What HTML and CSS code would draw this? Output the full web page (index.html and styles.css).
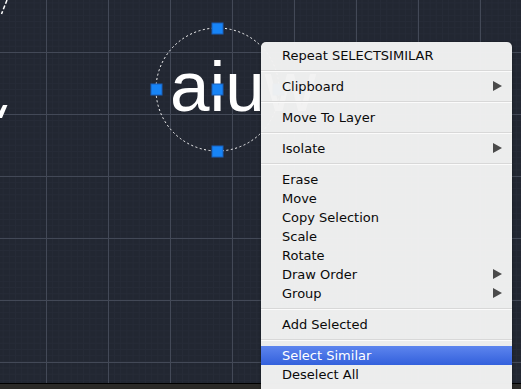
FILE: index.html
```html
<!DOCTYPE html>
<html lang="en">
<head>
    <meta charset="UTF-8">
    <title>Select Similar</title>
    <link rel="stylesheet" href="styles.css">
</head>
<body>
    <div class="canvas">
        <svg class="drawing" width="521" height="383" viewBox="0 0 521 383">
            <line x1="7" y1="0" x2="1.5" y2="14" stroke="#fff" stroke-width="1.5" stroke-dasharray="4 2"/>
            <polygon points="3,105 7.5,105 2,118 0,118 0,111" fill="#fff"/>
            <text x="170" y="111" class="label">aiuw</text>
            <circle cx="217.5" cy="89.5" r="61.5" fill="none" stroke="#fff" stroke-width="1" stroke-dasharray="2 2.5"/>
            <rect class="grip" x="212" y="23" width="11" height="11"/>
            <rect class="grip" x="151" y="84" width="11" height="11"/>
            <rect class="grip" x="212" y="84" width="11" height="11"/>
            <rect class="grip" x="212" y="146" width="11" height="11"/>
            <rect class="grip" x="273" y="84" width="11" height="11"/>
        </svg>

        <ul class="menu">
            <li class="item">Repeat SELECTSIMILAR</li>
            <li class="sep"></li>
            <li class="item sub">Clipboard</li>
            <li class="sep"></li>
            <li class="item">Move To Layer</li>
            <li class="sep"></li>
            <li class="item sub">Isolate</li>
            <li class="sep"></li>
            <li class="item">Erase</li>
            <li class="item">Move</li>
            <li class="item">Copy Selection</li>
            <li class="item">Scale</li>
            <li class="item">Rotate</li>
            <li class="item sub">Draw Order</li>
            <li class="item sub">Group</li>
            <li class="sep"></li>
            <li class="item">Add Selected</li>
            <li class="sep"></li>
            <li class="item active">Select Similar</li>
            <li class="item">Deselect All</li>
        </ul>
    </div>
    <div class="statusbar"></div>
</body>
</html>
```

FILE: styles.css
```css
body {
    margin: 0;
    width: 521px;
    height: 389px;
    overflow: hidden;
    background: #222732;
    font-family: "DejaVu Sans", "Liberation Sans", sans-serif;
}

.canvas {
    position: relative;
    height: 383px;
    background-color: #222732;
    background-image:
        linear-gradient(to right, #434957 1px, transparent 1px),
        linear-gradient(to bottom, #434957 1px, transparent 1px),
        linear-gradient(to right, #262b37 1px, transparent 1px),
        linear-gradient(to bottom, #262b37 1px, transparent 1px);
    background-size: 62px 62px, 62px 62px, 6.2px 6.2px, 6.2px 6.2px;
    background-position: 46px 0, 0 52px, 46px 0, 0 52px;
}

.drawing {
    position: absolute;
    left: 0;
    top: 0;
}

.label {
    font-family: "Liberation Sans", Arial, sans-serif;
    font-size: 71px;
    fill: #fff;
}

.grip {
    fill: #1784f6;
    stroke: #1a5fb8;
    stroke-width: 1;
}

.statusbar {
    height: 5px;
    border-top: 1px solid #000;
    background: #2b2a28;
}

.menu {
    position: absolute;
    left: 261px;
    top: 42px;
    width: 251px;
    height: 360px;
    margin: 0;
    padding: 4px 0 0;
    list-style: none;
    background: rgba(242, 242, 242, 0.975);
    border-radius: 5px 5px 0 0;
    box-shadow: 0 0 3px rgba(0, 0, 0, 0.35);
    font-size: 13px;
    color: #0a0a0a;
}

.item {
    position: relative;
    height: 19px;
    line-height: 19px;
    padding-left: 21px;
}

.sub::after {
    content: "";
    position: absolute;
    right: 10px;
    top: 4px;
    border-top: 5px solid transparent;
    border-bottom: 5px solid transparent;
    border-left: 9px solid #4a4a4a;
}

.sep {
    height: 0;
    margin: 5px 0 5px;
    border-top: 1px solid #d8d8d8;
    border-bottom: 1px solid #fbfbfb;
}

.active {
    color: #fff;
    background: linear-gradient(#5d85ee, #3360dc);
}
```
